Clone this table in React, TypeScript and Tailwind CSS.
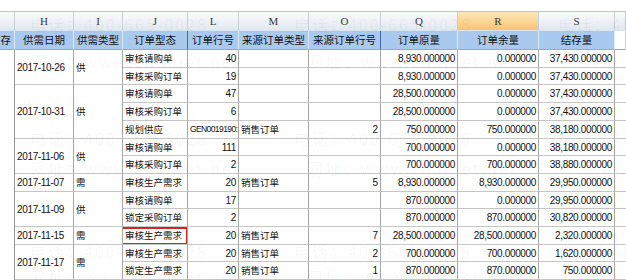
import React from 'react';

type Row = {
  date?: string;
  kind?: string;
  span?: number;
  state: string;
  line: string;
  srcType?: string;
  srcLine?: string;
  qty: string;
  rest: string;
  bal: string;
  mark?: boolean;
};

const rows: Row[] = [
  { date: '2017-10-26', kind: '供', span: 2, state: '审核请购单', line: '40', qty: '8,930.000000', rest: '0.000000', bal: '37,430.000000' },
  { state: '审核采购订单', line: '19', qty: '8,930.000000', rest: '0.000000', bal: '37,430.000000' },
  { date: '2017-10-31', kind: '供', span: 3, state: '审核请购单', line: '47', qty: '28,500.000000', rest: '0.000000', bal: '37,430.000000' },
  { state: '审核采购订单', line: '6', qty: '28,500.000000', rest: '0.000000', bal: '37,430.000000' },
  { state: '规划供应', line: 'GEN0019190:', srcType: '销售订单', srcLine: '2', qty: '750.000000', rest: '750.000000', bal: '38,180.000000' },
  { date: '2017-11-06', kind: '供', span: 2, state: '审核请购单', line: '111', qty: '700.000000', rest: '0.000000', bal: '38,180.000000' },
  { state: '审核采购订单', line: '2', qty: '700.000000', rest: '700.000000', bal: '38,880.000000' },
  { date: '2017-11-07', kind: '需', span: 1, state: '审核生产需求', line: '20', srcType: '销售订单', srcLine: '5', qty: '8,930.000000', rest: '8,930.000000', bal: '29,950.000000' },
  { date: '2017-11-09', kind: '供', span: 2, state: '审核请购单', line: '17', qty: '870.000000', rest: '0.000000', bal: '29,950.000000' },
  { state: '锁定采购订单', line: '2', qty: '870.000000', rest: '870.000000', bal: '30,820.000000' },
  { date: '2017-11-15', kind: '需', span: 1, state: '审核生产需求', line: '20', srcType: '销售订单', srcLine: '7', qty: '28,500.000000', rest: '28,500.000000', bal: '2,320.000000', mark: true },
  { date: '2017-11-17', kind: '需', span: 2, state: '审核生产需求', line: '20', srcType: '销售订单', srcLine: '2', qty: '700.000000', rest: '700.000000', bal: '1,620.000000' },
  { state: '锁定生产需求', line: '20', srcType: '销售订单', srcLine: '1', qty: '870.000000', rest: '870.000000', bal: '750.000000' },
];

const spanCls: Record<number, string> = { 1: '', 2: 'row-span-2', 3: 'row-span-3' };

const letters = ['', 'H', 'I', 'J', 'L', 'M', 'O', 'Q', 'R', 'S', ''];
const titles = ['存', '供需日期', '供需类型', '订单型态', '订单行号', '来源订单类型', '来源订单行号', '订单原量', '订单余量', '结存量', ''];

const cell = 'flex items-center overflow-hidden whitespace-nowrap border-r border-b border-r-[#a8a8a8] border-b-[#c6c6c6] text-[#111]';
const num = `${cell} justify-end pr-[2px]`;
const txt = `${cell} pl-[2px]`;

function Watermark() {
  const phone = '电话：400-665-0028';
  const site = '网址：www.chanjet.net';
  const bands = [
    { top: 'top-[14px]', top2: 'top-[51px]' },
    { top: 'top-[128px]', top2: 'top-[158px]' },
    { top: 'top-[241px]', top2: 'top-[267px]' },
  ];
  return (
    <div className="pointer-events-none absolute inset-0 overflow-hidden font-['Noto_Sans_CJK_SC',sans-serif] text-[16px] leading-[20px] tracking-[2px] text-black/[0.045]">
      {bands.map((b, i) => (
        <React.Fragment key={i}>
          <div className={`absolute left-[30px] ${b.top} flex gap-[86px] whitespace-nowrap`}>
            <span>{phone}</span>
            <span>{phone}</span>
            <span>{phone}</span>
          </div>
          <div className={`absolute left-[30px] ${b.top2} flex gap-[66px] whitespace-nowrap`}>
            <span>{site}</span>
            <span>{site}</span>
            <span>{site}</span>
          </div>
        </React.Fragment>
      ))}
    </div>
  );
}

export default function App() {
  return (
    <div className="relative h-[280px] w-[626px] overflow-hidden bg-white">
      {/* formula bar edge */}
      <div className="h-[12px] border-b border-[#b4c6dc] bg-white" />

      <div className="grid grid-cols-[15px_59px_49px_65px_51px_70px_72px_77px_81px_76px_11px] grid-rows-[19px_19px_18px_17px_18px_18px_18px_17px_18px_18px_17px_18px_18px_17px_18px]">
        {/* column letters */}
        {letters.map((l, i) => (
          <div
            key={'l' + i}
            className={`flex items-center justify-center border-r border-b border-r-[#c6d0dc] border-b-[#dbe4ef] font-['Liberation_Serif',serif] text-[11px] text-[#3a3a3a] ${
              l === 'R'
                ? 'bg-gradient-to-b from-[#fde7b6] to-[#f6c672]'
                : 'bg-gradient-to-b from-[#fafbfd] to-[#e2e8f0]'
            }`}
          >
            {l}
          </div>
        ))}

        {/* titles */}
        {titles.map((t, i) => (
          <div
            key={'t' + i}
            className={`flex items-center overflow-hidden whitespace-nowrap border-b border-r border-b-[#9aa8b8] font-['Noto_Sans_CJK_SC',sans-serif] text-[10.5px] text-[#111] ${
              i === 0 ? 'justify-end pr-[3px]' : 'justify-center'
            } ${i === 10 ? 'bg-white border-r-[#d0d0d0]' : 'bg-[#a9c9ef]'} ${
              i === 3 || i === 6 ? 'border-r-[#3f6fa8]' : i === 10 ? '' : 'border-r-[#dfe8f4]'
            }`}
          >
            {t}
          </div>
        ))}

        {/* blank frozen column */}
        <div className="row-span-13 border-r border-r-[#9a9a9a]" />

        {rows.map((r, i) => (
          <React.Fragment key={i}>
            {r.date && (
              <>
                <div className={`${txt} ${spanCls[r.span ?? 1]} font-['Liberation_Sans',sans-serif] text-[10px] tracking-[-0.35px]`}>
                  {r.date}
                </div>
                <div className={`${txt} ${spanCls[r.span ?? 1]} font-['Noto_Sans_CJK_SC',sans-serif] text-[9.5px]`}>
                  {r.kind}
                </div>
              </>
            )}
            <div className={`${txt} relative pl-[1px] font-['Noto_Sans_CJK_SC',sans-serif] text-[9.5px]`}>
              {r.state}
              {r.mark && (
                <div className="absolute -left-[10px] -right-[1px] top-0 bottom-[-1px] border-2 border-[#d42424]" />
              )}
            </div>
            {r.line.startsWith('GEN') ? (
              <div className={`${txt} pl-[1px] font-['Liberation_Sans',sans-serif] text-[8.5px] tracking-[-0.6px]`}>{r.line}</div>
            ) : (
              <div className={`${num} font-['Liberation_Sans',sans-serif] text-[10px] tracking-[-0.35px]`}>{r.line}</div>
            )}
            <div className={`${txt} font-['Noto_Sans_CJK_SC',sans-serif] text-[9.5px]`}>{r.srcType}</div>
            <div className={`${num} font-['Liberation_Sans',sans-serif] text-[10px]`}>{r.srcLine}</div>
            <div className={`${num} font-['Liberation_Sans',sans-serif] text-[10px] tracking-[-0.35px]`}>{r.qty}</div>
            <div className={`${num} font-['Liberation_Sans',sans-serif] text-[10px] tracking-[-0.35px]`}>{r.rest}</div>
            <div className={`${num} font-['Liberation_Sans',sans-serif] text-[10px] tracking-[-0.35px]`}>{r.bal}</div>
            <div className="border-b border-b-[#c6c6c6]" />
          </React.Fragment>
        ))}
      </div>

      <Watermark />
    </div>
  );
}
